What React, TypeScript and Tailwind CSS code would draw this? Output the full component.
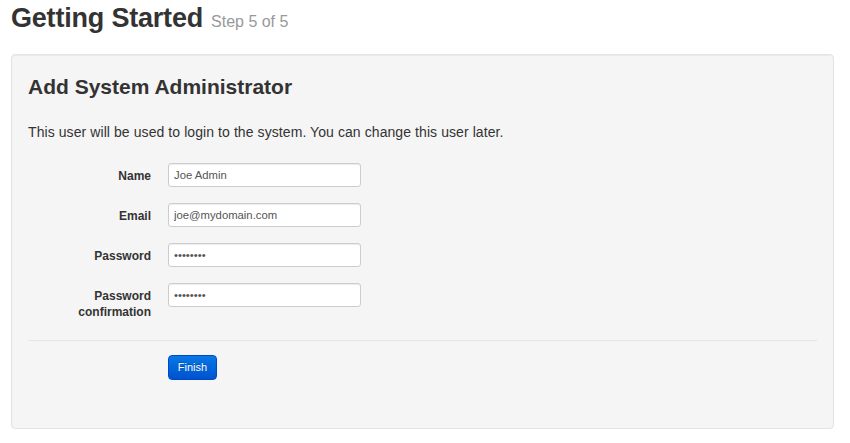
import React from "react";

const fields = [
  { label: "Name", value: "Joe Admin", type: "text" },
  { label: "Email", value: "joe@mydomain.com", type: "text" },
  { label: "Password", value: "secret12", type: "password" },
  { label: "Password confirmation", value: "secret12", type: "password" },
];

export default function App() {
  return (
    <div
      className="min-h-[443px] w-[850px] bg-white pl-[11px] pr-[16px] text-[#333]"
      style={{ fontFamily: '"Liberation Sans", Arial, sans-serif' }}
    >
      <h1 className="flex h-[38px] items-baseline gap-[8px] leading-[36px]">
        <span className="text-[27px] font-bold tracking-[-0.2px] text-[#333]">Getting Started</span>
        <span className="text-[16px] text-[#999]">Step 5 of 5</span>
      </h1>

      <div className="mt-[16px] rounded-[4px] border border-[#e3e3e3] bg-[#f5f5f5] px-[16px] pb-[48px] pt-[18px] shadow-[inset_0_1px_1px_rgba(0,0,0,0.05)]">
        <h2 className="text-[21px] font-bold leading-[28px] text-[#333]">Add System Administrator</h2>
        <p className="mt-[21px] text-[14px] leading-[20px] tracking-[0.08px] text-[#333]">
          This user will be used to login to the system. You can change this user later.
        </p>

        <form className="mt-[21px] flex flex-col gap-[16px]">
          {fields.map((f) => (
            <div key={f.label} className="flex items-start">
              <label className="w-[123px] pt-[5px] text-right text-[12px] font-bold leading-[16px] text-[#333]">
                {f.label}
              </label>
              <input
                type={f.type}
                defaultValue={f.value}
                className="ml-[17px] h-[24px] w-[193px] rounded-[3px] border border-[#ccc] bg-white px-[5px] text-[11.3px] text-[#555] shadow-[inset_0_1px_1px_rgba(0,0,0,0.075)] outline-none"
                style={{ fontFamily: '"Liberation Sans", Arial, sans-serif' }}
              />
            </div>
          ))}

          <div className="mt-[4px] border-t border-[#e5e5e5] pl-[140px] pt-[13px]">
            <button
              type="button"
              className="h-[25px] w-[49px] rounded-[4px] border border-[#0048c4] bg-gradient-to-b from-[#0b78e6] to-[#0052cf] text-[11px] font-normal text-white [text-shadow:0_-1px_0_rgba(0,0,0,0.25)]"
            >
              Finish
            </button>
          </div>
        </form>
      </div>
    </div>
  );
}
